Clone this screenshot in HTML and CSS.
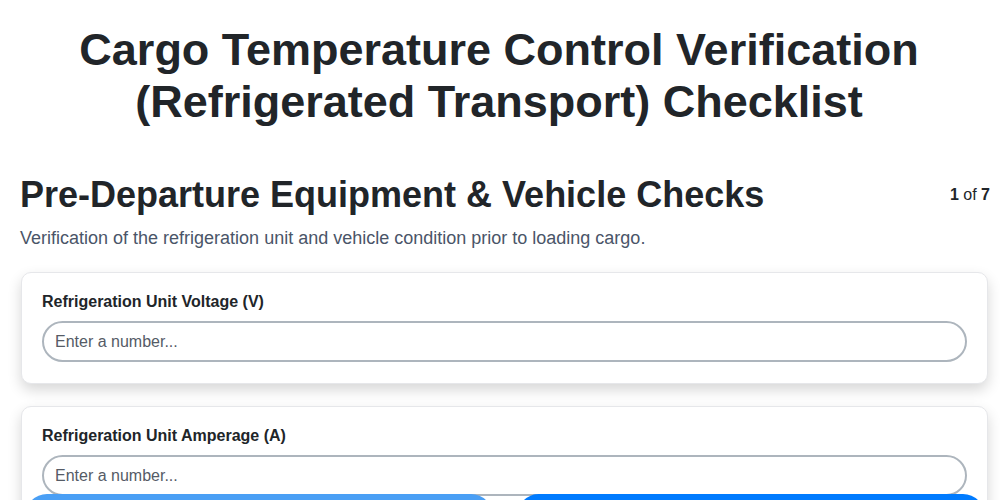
FILE: index.html
```html
<!DOCTYPE html>
<html lang="en">
<head>
<meta charset="utf-8">
<title>Cargo Temperature Control Verification</title>
<link rel="stylesheet" href="styles.css">
</head>
<body>
<div class="page">
  <h1 class="title">Cargo Temperature Control Verification (Refrigerated Transport) Checklist</h1>
  <div class="section-head">
    <h2 class="section-title">Pre-Departure Equipment &amp; Vehicle Checks</h2>
    <div class="progress"><b>1</b> of <b>7</b></div>
  </div>
  <p class="section-desc">Verification of the refrigeration unit and vehicle condition prior to loading cargo.</p>
  <div class="cards">
    <div class="card">
      <label class="field-label">Refrigeration Unit Voltage (V)</label>
      <input class="field-input" type="text" placeholder="Enter a number...">
    </div>
    <div class="card">
      <label class="field-label">Refrigeration Unit Amperage (A)</label>
      <input class="field-input" type="text" placeholder="Enter a number...">
    </div>
  </div>
</div>
<div class="nav">
  <button class="btn btn-prev" aria-label="Previous"></button>
  <button class="btn btn-next" aria-label="Next"></button>
</div>
</body>
</html>
```
FILE: styles.css
```css
* { box-sizing: border-box; }
html, body { margin: 0; padding: 0; background: #fff; overflow: hidden; }
body { font-family: "Liberation Sans", Arial, sans-serif; color: #212529; }
.page { padding: 0 10px 0 20px; }
.title {
  margin: 0 -8px 0 -20px;
  padding-top: 24px;
  font-size: 45px;
  line-height: 52px;
  font-weight: 700;
  text-align: center;
  color: #212529;
}
.section-head {
  display: flex;
  justify-content: space-between;
  align-items: center;
  margin-top: 45px;
}
.section-title {
  margin: 0;
  font-size: 36px;
  line-height: 44px;
  font-weight: 700;
  color: #212529;
}
.progress { font-size: 16px; color: #212529; }
.section-desc {
  margin: 9px 0 0;
  font-size: 18px;
  line-height: 24px;
  color: #4a5568;
}
.cards {
  display: flex;
  flex-direction: column;
  gap: 22px;
  margin-top: 22px;
  padding-right: 2px;
}
.card {
  background: #fff;
  border: 1px solid #e6e7ea;
  border-radius: 10px;
  padding: 19px 20px 21px;
  box-shadow: 0 6px 14px rgba(0,0,0,0.16);
  display: flex;
  flex-direction: column;
  margin-left: 1px;
}
.field-label {
  font-size: 16px;
  line-height: 19px;
  font-weight: 700;
  color: #212529;
  margin-bottom: 10px;
}
.field-input {
  height: 41px;
  border: 2px solid #adb5bd;
  border-radius: 21px;
  padding: 0 11px;
  font-family: "Liberation Sans", Arial, sans-serif;
  font-size: 16px;
  color: #212529;
  background: #fff;
  outline: none;
}
.field-input::placeholder { color: #555b66; }
.nav {
  position: fixed;
  left: 25px;
  right: 15px;
  bottom: -38px;
  display: flex;
  gap: 24px;
}
.btn {
  flex: 1;
  height: 44px;
  border: none;
  border-radius: 24px;
}
.btn-prev { background: #4a9ff5; }
.btn-next { background: #007bff; }
```
